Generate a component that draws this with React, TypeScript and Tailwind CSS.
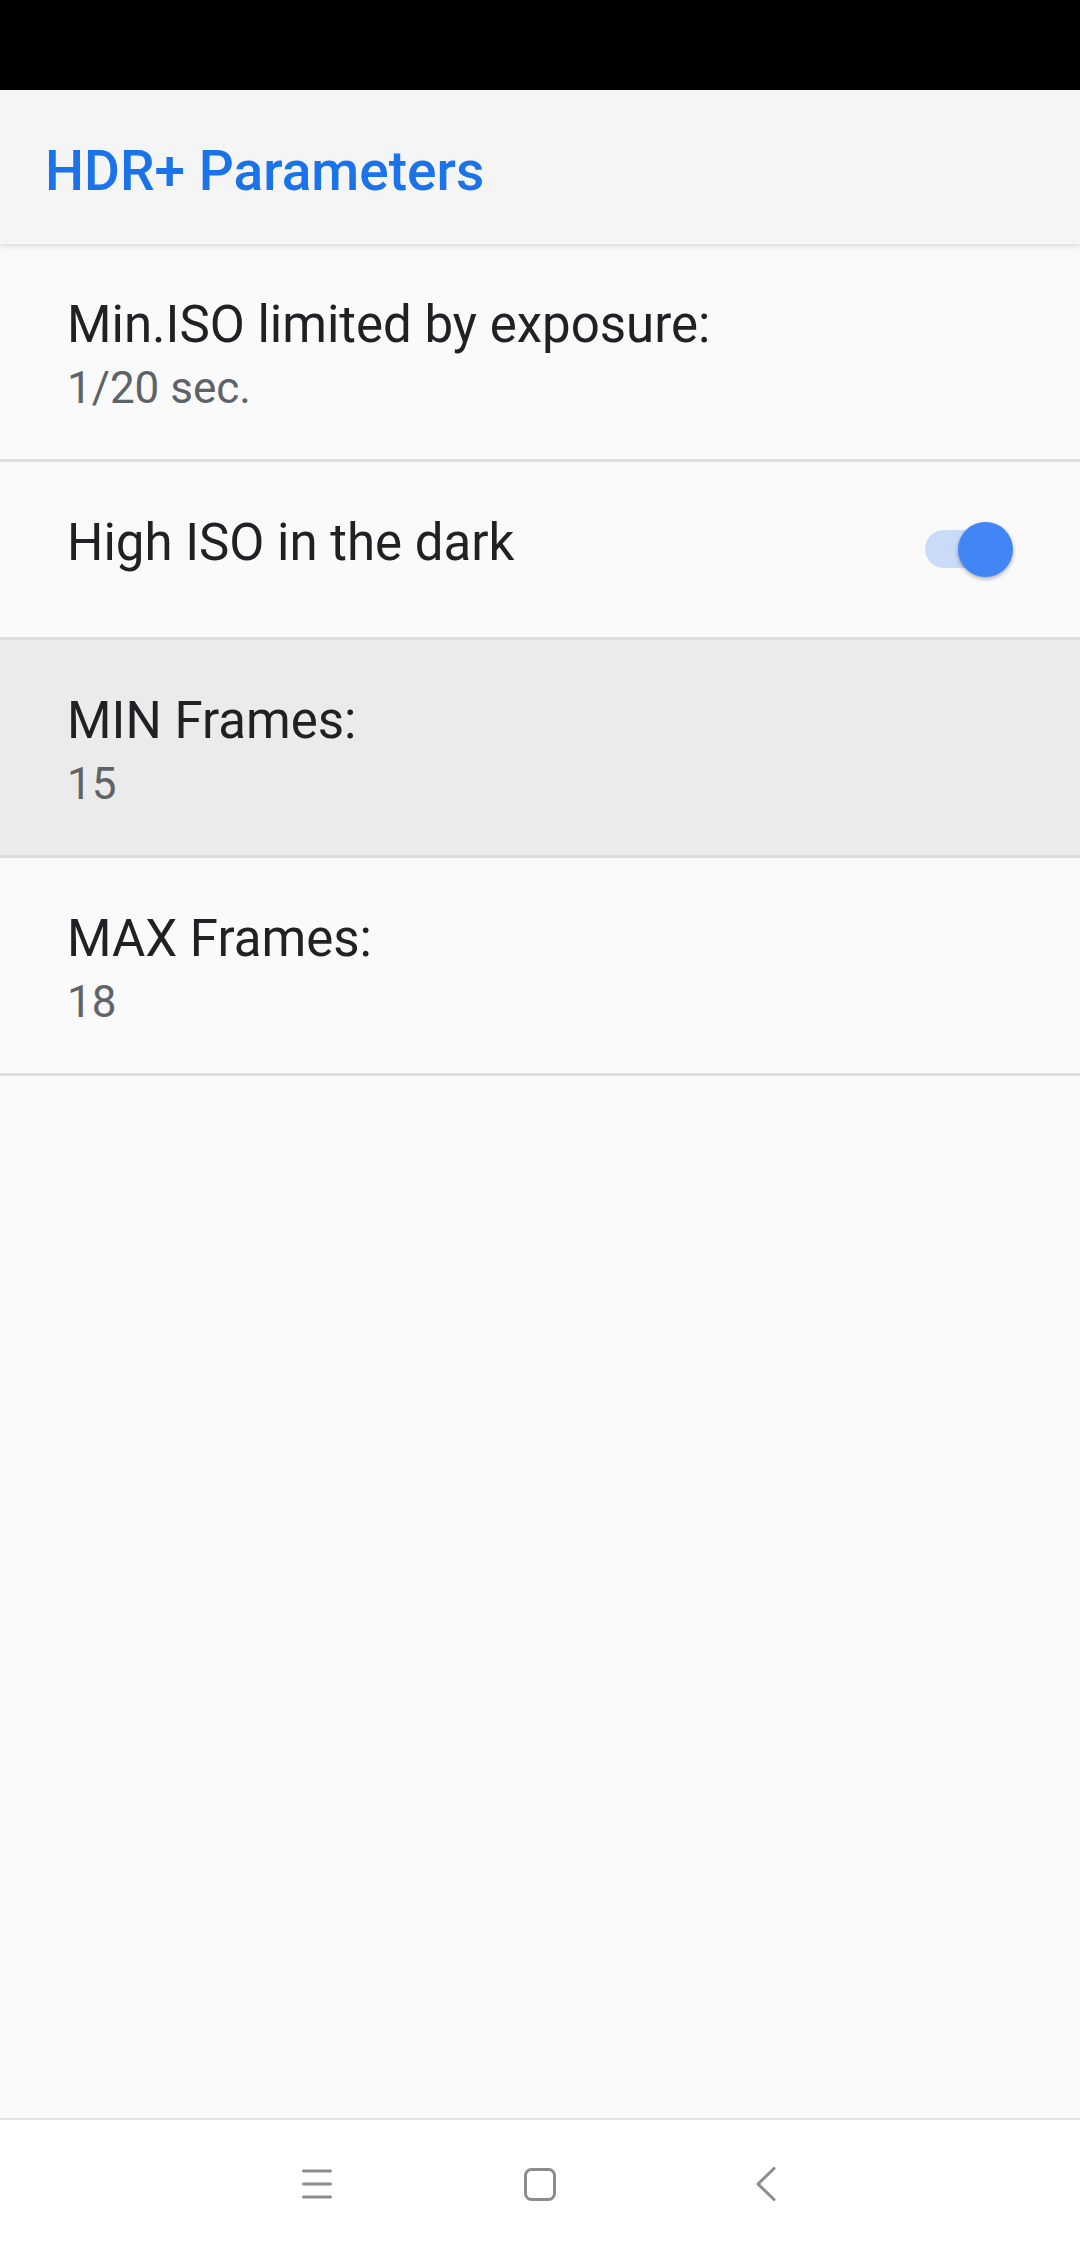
import React from "react";

type Pref = {
  title: string;
  summary?: string;
  toggle?: boolean;
  pressed?: boolean;
};

const prefs: Pref[] = [
  { title: "Min.ISO limited by exposure:", summary: "1/20 sec." },
  { title: "High ISO in the dark", toggle: true },
  { title: "MIN Frames:", summary: "15", pressed: true },
  { title: "MAX Frames:", summary: "18" },
];

const Switch = () => (
  <div className="relative w-[88px] h-[55px] shrink-0">
    <div className="absolute left-0 top-[8px] w-[80px] h-[38px] rounded-full bg-[#c9dbf8]" />
    <div className="absolute right-0 top-0 w-[55px] h-[55px] rounded-full bg-[#4285f4] shadow-[0_2px_4px_rgba(0,0,0,0.3)]" />
  </div>
);

const PrefRow = ({ pref }: { pref: Pref }) => (
  <div
    className={`flex items-center pl-[67px] pr-[67px] border-b-[3px] border-[#dedede] ${
      pref.pressed ? "bg-[#ebebeb]" : "bg-[#fafafa]"
    }`}
  >
    <div className={`flex-1 pt-[51px] ${pref.summary ? "pb-[38px]" : "pb-[64px]"}`}>
      <div className="text-[51px] leading-[60px] text-[#202124]">{pref.title}</div>
      {pref.summary && (
        <div className="text-[44px] leading-[66px] text-[#5f6368]">{pref.summary}</div>
      )}
    </div>
    {pref.toggle && <Switch />}
  </div>
);

const NavBar = () => (
  <div className="h-[130px] shrink-0 bg-white border-t-[2px] border-[#e3e3e3] flex items-center justify-center gap-[163px]">
    {/* recents */}
    <div className="w-[60px] h-[40px] flex items-center justify-center">
      <svg width="30" height="30" viewBox="0 0 30 30">
        <g stroke="#8c8c8c" strokeWidth="3" strokeLinecap="round">
          <line x1="1.5" y1="2" x2="28.5" y2="2" />
          <line x1="1.5" y1="15" x2="28.5" y2="15" />
          <line x1="1.5" y1="28" x2="28.5" y2="28" />
        </g>
      </svg>
    </div>
    {/* home */}
    <div className="w-[60px] h-[40px] flex items-center justify-center">
      <svg width="32" height="33" viewBox="0 0 32 33">
        <rect x="1.5" y="1.5" width="29" height="30" rx="6" fill="none" stroke="#8c8c8c" strokeWidth="3" />
      </svg>
    </div>
    {/* back */}
    <div className="w-[60px] h-[40px] flex items-center justify-center">
      <svg width="22" height="34" viewBox="0 0 22 34" className="ml-[6px]">
        <polyline
          points="19,1.5 3,17 19,32.5"
          fill="none"
          stroke="#8c8c8c"
          strokeWidth="3"
          strokeLinecap="round"
          strokeLinejoin="round"
        />
      </svg>
    </div>
  </div>
);

const App = () => {
  return (
    <div className="w-[1080px] h-[2248px] flex flex-col bg-[#fafafa] font-['Roboto',sans-serif]">
      <div className="h-[90px] shrink-0 bg-black" />

      <div className="h-[154px] shrink-0 bg-[#f5f5f5] pl-[45px] pt-[49px] shadow-[0_2px_5px_rgba(0,0,0,0.14)] relative z-10">
        <h1 className="text-[55px] leading-[64px] font-medium text-[#1a73e8]">HDR+ Parameters</h1>
      </div>

      <div className="flex-1">
        {prefs.map((p) => (
          <PrefRow key={p.title} pref={p} />
        ))}
      </div>

      <NavBar />
    </div>
  );
};

export default App;
